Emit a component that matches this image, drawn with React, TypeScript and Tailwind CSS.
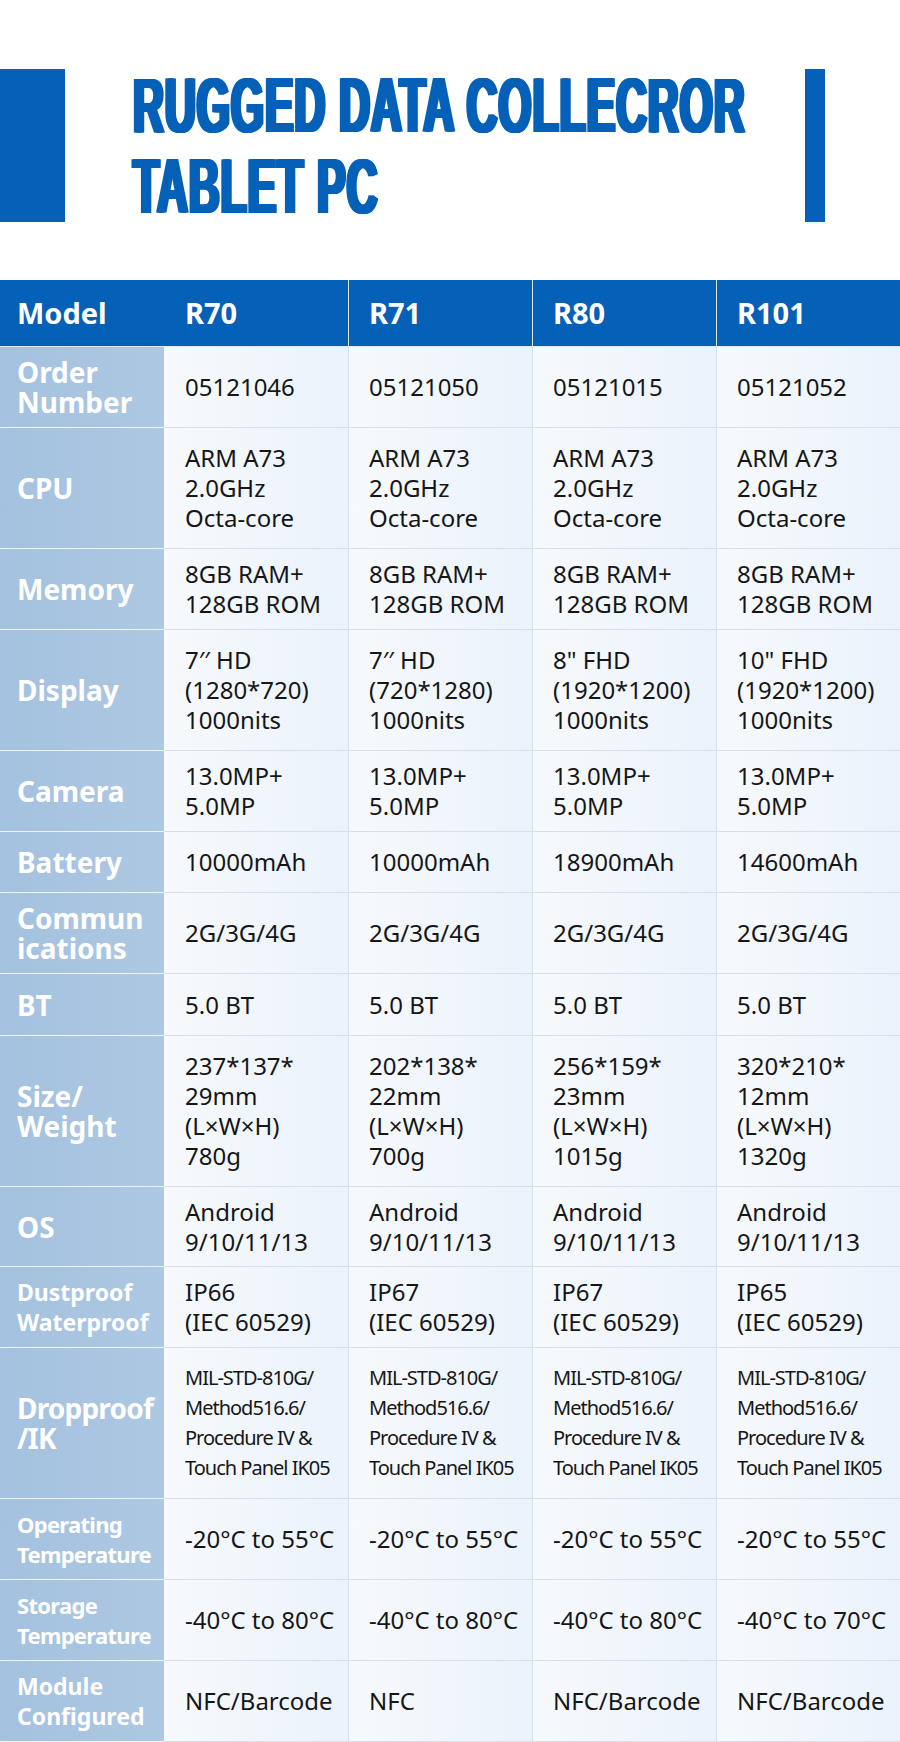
type Row = {
  label: string;
  labelClass: string;
  h: string;
  vals: string[];
  valClass?: string;
};

const rows: Row[] = [
  { label: "Order\nNumber", labelClass: "text-[28px]", h: "h-[81px]", vals: ["05121046", "05121050", "05121015", "05121052"] },
  {
    label: "CPU",
    labelClass: "text-[28px]",
    h: "h-[121px]",
    vals: Array(4).fill("ARM A73\n2.0GHz\nOcta-core"),
  },
  { label: "Memory", labelClass: "text-[28px]", h: "h-[81px]", vals: Array(4).fill("8GB RAM+\n128GB ROM") },
  {
    label: "Display",
    labelClass: "text-[28px]",
    h: "h-[121px]",
    vals: [
      "7\u2032\u2032 HD\n(1280*720)\n1000nits",
      "7\u2032\u2032 HD\n(720*1280)\n1000nits",
      '8" FHD\n(1920*1200)\n1000nits',
      '10" FHD\n(1920*1200)\n1000nits',
    ],
  },
  { label: "Camera", labelClass: "text-[28px]", h: "h-[81px]", vals: Array(4).fill("13.0MP+\n5.0MP") },
  { label: "Battery", labelClass: "text-[28px]", h: "h-[61px]", vals: ["10000mAh", "10000mAh", "18900mAh", "14600mAh"] },
  { label: "Commun\nications", labelClass: "text-[28px]", h: "h-[81px]", vals: Array(4).fill("2G/3G/4G") },
  { label: "BT", labelClass: "text-[28px]", h: "h-[62px]", vals: Array(4).fill("5.0 BT") },
  {
    label: "Size/\nWeight",
    labelClass: "text-[28px]",
    h: "h-[151px]",
    vals: [
      "237*137*\n29mm\n(L\u00d7W\u00d7H)\n780g",
      "202*138*\n22mm\n(L\u00d7W\u00d7H)\n700g",
      "256*159*\n23mm\n(L\u00d7W\u00d7H)\n1015g",
      "320*210*\n12mm\n(L\u00d7W\u00d7H)\n1320g",
    ],
  },
  { label: "OS", labelClass: "text-[28px]", h: "h-[80px]", vals: Array(4).fill("Android\n9/10/11/13") },
  {
    label: "Dustproof\nWaterproof",
    labelClass: "text-[23px]",
    h: "h-[81px]",
    vals: ["IP66\n(IEC 60529)", "IP67\n(IEC 60529)", "IP67\n(IEC 60529)", "IP65\n(IEC 60529)"],
  },
  {
    label: "Dropproof\n/IK",
    labelClass: "text-[28px] tracking-[-0.8px]",
    h: "h-[151px]",
    vals: Array(4).fill("MIL-STD-810G/\nMethod516.6/\nProcedure IV &\nTouch Panel IK05"),
    valClass: "text-[20px] tracking-[-1px]",
  },
  {
    label: "Operating\nTemperature",
    labelClass: "text-[22px] tracking-[-0.7px]",
    h: "h-[81px]",
    vals: Array(4).fill("-20\u00b0C to 55\u00b0C"),
  },
  {
    label: "Storage\nTemperature",
    labelClass: "text-[22px] tracking-[-0.7px]",
    h: "h-[81px]",
    vals: ["-40\u00b0C to 80\u00b0C", "-40\u00b0C to 80\u00b0C", "-40\u00b0C to 80\u00b0C", "-40\u00b0C to 70\u00b0C"],
  },
  {
    label: "Module\nConfigured",
    labelClass: "text-[23px]",
    h: "h-[81px]",
    vals: ["NFC/Barcode", "NFC", "NFC/Barcode", "NFC/Barcode"],
  },
];

const models = ["R70", "R71", "R80", "R101"];

export default function App() {
  return (
    <div className="w-[900px] overflow-hidden bg-white font-['Noto_Sans',sans-serif]">
      {/* Title block */}
      <div className="flex h-[280px] items-start">
        <div className="mt-[69px] h-[153px] w-[65px] shrink-0 bg-[#0560b8]" />
        <div className="ml-[66px] mt-[65px] w-[674px] shrink-0 font-['Liberation_Sans',Arial,sans-serif] text-[78px] font-bold leading-[81px] tracking-[2px] text-[#0560b8]">
          <div className="origin-left scale-x-[0.545] whitespace-nowrap [text-shadow:2px_0_0_#0560b8,4px_0_0_#0560b8,6px_0_0_#0560b8,8px_0_0_#0560b8]">
            RUGGED DATA COLLECROR
          </div>
          <div className="origin-left scale-x-[0.545] whitespace-nowrap [text-shadow:2px_0_0_#0560b8,4px_0_0_#0560b8,6px_0_0_#0560b8,8px_0_0_#0560b8]">
            TABLET PC
          </div>
        </div>
        <div className="mt-[69px] h-[153px] w-[20px] shrink-0 bg-[#0560b8]" />
      </div>

      {/* Spec table */}
      <div className="grid grid-cols-[164px_184px_184px_184px_184px]">
        <div className="flex h-[67px] items-center border-b border-[#dce8f4] bg-[#0560b8] pl-[17px] text-[29px] font-bold text-white">
          Model
        </div>
        {models.map((m, i) => (
          <div
            key={m}
            className={`flex h-[67px] items-center border-b border-[#dce8f4] bg-[#0560b8] text-[29px] font-bold text-white ${
              i === 0 ? "pl-[21px]" : "border-l pl-5"
            }`}
          >
            {m}
          </div>
        ))}

        {rows.map((row) => (
          <div key={row.label} className="contents">
            <div
              className={`flex ${row.h} items-center whitespace-pre-line border-b border-[#eef4fa] bg-linear-to-r from-[#a4c1df] to-[#adc8e2] pl-[17px] font-bold leading-[30px] text-white ${row.labelClass}`}
            >
              {row.label}
            </div>
            {row.vals.map((v, i) => (
              <div
                key={i}
                className={`flex ${row.h} items-center whitespace-pre-line border-b border-[#d6dee7] bg-linear-to-r from-[#f7fafd] to-[#eaf2fb] leading-[30px] text-[#161616] ${
                  row.valClass ?? "text-[24px]"
                } ${i === 0 ? "pl-[21px]" : "border-l pl-5"}`}
              >
                {v}
              </div>
            ))}
          </div>
        ))}
      </div>
    </div>
  );
}
